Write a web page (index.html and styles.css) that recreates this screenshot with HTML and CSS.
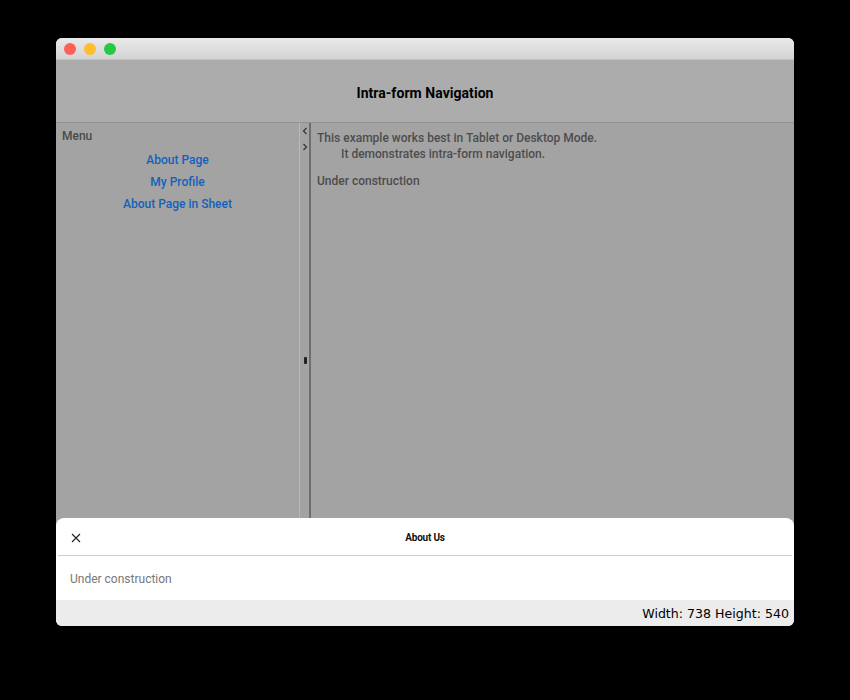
FILE: index.html
```html
<!DOCTYPE html>
<html>
<head>
<meta charset="utf-8">
<link rel="stylesheet" href="styles.css">
</head>
<body>
<div class="window">
  <div class="titlebar">
    <span class="light red"></span>
    <span class="light yellow"></span>
    <span class="light green"></span>
  </div>
  <div class="content">
    <div class="header">Intra-form Navigation</div>
    <div class="main">
      <div class="menu">
        <div class="menu-title">Menu</div>
        <div class="links">
          <a class="link">About Page</a>
          <a class="link">My Profile</a>
          <a class="link">About Page in Sheet</a>
        </div>
      </div>
      <div class="splitter">
        <div class="chevrons">
          <svg width="6" height="8" viewBox="0 0 6 8"><path d="M4.5 1 L1.5 4 L4.5 7" fill="none" stroke="#333" stroke-width="1.2"/></svg>
          <svg width="6" height="8" viewBox="0 0 6 8"><path d="M1.5 1 L4.5 4 L1.5 7" fill="none" stroke="#333" stroke-width="1.2"/></svg>
        </div>
        <div class="handle"></div>
      </div>
      <div class="detail">
        <div class="intro">This example works best in Tablet or Desktop Mode.<br><span class="indent">It demonstrates intra-form navigation.</span></div>
        <div class="uc">Under construction</div>
      </div>
    </div>
    <div class="sheet">
      <div class="sheet-head">
        <svg class="close" width="10" height="10" viewBox="0 0 10 10"><path d="M1 1 L9 9 M9 1 L1 9" stroke="#222" stroke-width="1.1"/></svg>
        <div class="sheet-title">About Us</div>
      </div>
      <div class="sheet-body">Under construction</div>
    </div>
  </div>
  <div class="status">Width: 738 Height: 540</div>
</div>
</body>
</html>
```
FILE: styles.css
```css
html, body { margin: 0; padding: 0; background: #000; }
body { padding: 38px 56px; height: 700px; box-sizing: border-box; }
.window {
  width: 738px;
  border-radius: 6px;
  overflow: hidden;
  background: #ececec;
  font-family: Roboto, "Noto Sans", sans-serif;
}
.titlebar {
  height: 22px;
  background: linear-gradient(#e9e9e9, #d4d4d4);
  border-bottom: 1px solid #c2c2c2;
  box-sizing: border-box;
  display: flex;
  align-items: center;
  gap: 8px;
  padding-left: 8px;
}
.light { width: 12px; height: 12px; border-radius: 50%; display: block; }
.red { background: #fe5f57; }
.yellow { background: #febc2e; }
.green { background: #28c840; }
.content { position: relative; height: 540px; display: flex; flex-direction: column; }
.header {
  height: 63px;
  background: #acacac;
  border-bottom: 1px solid #929292;
  box-sizing: border-box;
  display: flex;
  align-items: center;
  justify-content: center;
  font-weight: 700;
  font-size: 14px;
  color: #000;
  padding-top: 4px;
  letter-spacing: 0.05px;
}
.main { flex: 1; display: flex; background: #a3a3a3; }
.menu { border-right: 1px solid #b8b8b8; padding: 6px 0 0 6px; box-sizing: border-box; width: 244px; }
.menu-title { font-size: 12px; font-weight: 500; color: #4a4a4a; line-height: 14px; }
.links { display: flex; flex-direction: column; align-items: center; gap: 8px; margin-top: 10px; padding-right: 6px; }
.link { font-size: 12px; font-weight: 500; color: #1261bd; line-height: 14px; }
.splitter { width: 9px; border-right: 2px solid #6e6e6e; position: relative; box-sizing: content-box; }
.chevrons { display: flex; flex-direction: column; align-items: center; gap: 8px; padding-top: 4px; }
.chevrons svg { display: block; }
.handle { position: absolute; left: 4px; top: 234px; width: 3px; height: 7px; background: #222; border-radius: 1px; }
.detail { flex: 1; padding: 7px 6px; color: #4d4d4d; font-size: 12px; font-weight: 500; }
.intro { line-height: 16px; }
.indent { padding-left: 24px; }
.uc { margin-top: 11px; line-height: 16px; }
.sheet {
  position: absolute;
  left: 0; right: 0; bottom: 0;
  height: 82px;
  background: #fff;
  border-radius: 8px 8px 0 0;
}
.sheet-head {
  height: 37px;
  margin: 0 2px;
  border-bottom: 1px solid #cccccc;
  display: flex;
  align-items: center;
  justify-content: center;
  position: relative;
}
.close { position: absolute; left: 13px; top: 15px; }
.sheet-title { font-size: 10px; font-weight: 700; color: #111; letter-spacing: -0.2px; padding-top: 2px; }
.sheet-body { padding: 16px 14px 0; font-size: 12px; color: #777; }
.status {
  height: 26px;
  background: #ececec;
  display: flex;
  align-items: center;
  justify-content: flex-end;
  padding-right: 5px;
  box-sizing: border-box;
  font-family: "DejaVu Sans", sans-serif;
  font-size: 12.6px;
  color: #000;
}
```
